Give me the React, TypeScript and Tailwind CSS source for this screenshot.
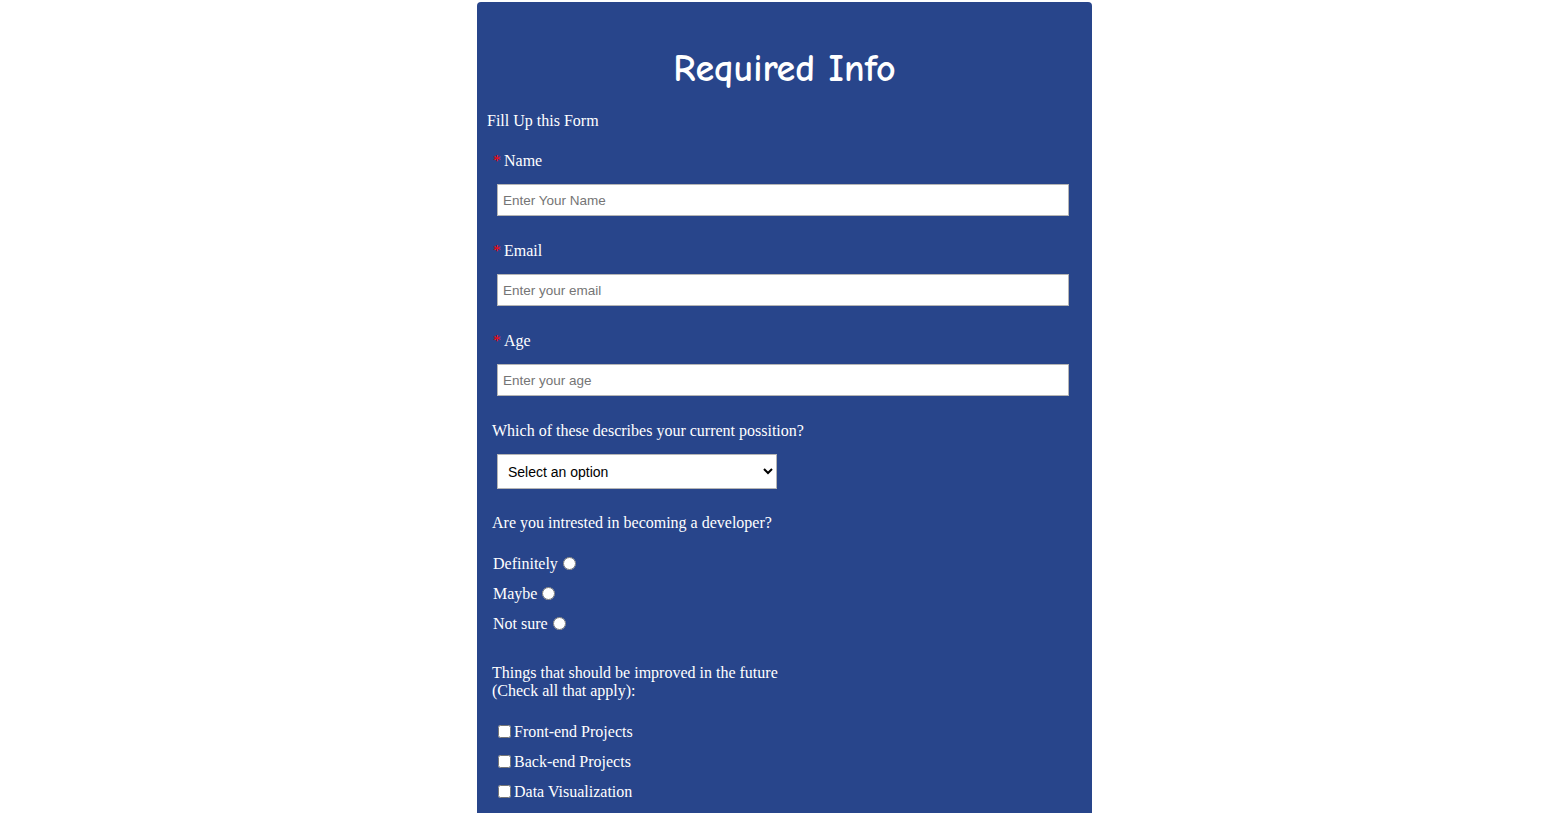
import React from "react";

const serif = "font-['Liberation_Serif','Times_New_Roman',serif]";

function Field({ label, placeholder, first }: { label: string; placeholder: string; first?: boolean }) {
  return (
    <div className={first ? "mt-[22px]" : "mt-[26px]"}>
      <div className={`${serif} ml-[6px] text-[16px] leading-[18px] text-white`}>
        <span className="text-[#ff0000]">*</span>
        <span className="ml-[3px]">{label}</span>
      </div>
      <input
        type="text"
        placeholder={placeholder}
        className="mt-[14px] ml-[10px] block h-[32px] w-[572px] border border-[#b5b5b5] bg-white px-[5px] font-['Liberation_Sans',Arial,sans-serif] text-[13.5px] text-black placeholder:text-[#757575]"
      />
    </div>
  );
}

export default function App() {
  return (
    <div className="min-h-screen bg-white pt-[2px] pl-[4px]">
      <div className="mx-auto w-[615px] rounded-t-[4px] bg-[#28458b] px-[10px] pt-[45px] pb-[60px] text-white">
        <h1 className="text-center font-['Comic_Sans_MS','Comic_Neue',cursive] text-[38px] leading-[44px] font-bold">
          Required Info
        </h1>
        <p className={`${serif} mt-[21px] text-[16px] leading-[18px]`}>Fill Up this Form</p>

        <Field first label="Name" placeholder="Enter Your Name" />
        <Field label="Email" placeholder="Enter your email" />
        <Field label="Age" placeholder="Enter your age" />

        <p className={`${serif} mt-[26px] ml-[5px] text-[16px] leading-[18px]`}>
          Which of these describes your current possition?
        </p>
        <select
          defaultValue=""
          className="mt-[14px] ml-[10px] block h-[35px] w-[280px] border border-[#b5b5b5] bg-white pl-[6px] pr-[4px] font-['Liberation_Sans',Arial,sans-serif] text-[14px] text-black"
        >
          <option value="" disabled>
            Select an option
          </option>
          <option>Student</option>
          <option>Full-time job</option>
          <option>Prefer not to say</option>
        </select>

        <p className={`${serif} mt-[25px] ml-[5px] text-[16px] leading-[18px]`}>
          Are you intrested in becoming a developer?
        </p>
        <div className={`${serif} mt-[17px] ml-[6px] text-[16px]`}>
          {["Definitely", "Maybe", "Not sure"].map((o) => (
            <label key={o} className="flex h-[30px] items-center">
              <span>{o}</span>
              <input type="radio" name="dev" className="ml-[5px] h-[13px] w-[13px] -translate-y-[1px]" />
            </label>
          ))}
        </div>

        <p className={`${serif} mt-[25px] ml-[5px] text-[16px] leading-[18px]`}>
          Things that should be improved in the future
          <br />
          (Check all that apply):
        </p>
        <div className={`${serif} mt-[17px] ml-[11px] text-[16px]`}>
          {["Front-end Projects", "Back-end Projects", "Data Visualization"].map((o) => (
            <label key={o} className="flex h-[30px] items-center">
              <input type="checkbox" className="mr-[3px] h-[13px] w-[13px] -translate-y-[1px]" />
              <span>{o}</span>
            </label>
          ))}
        </div>
      </div>
    </div>
  );
}
